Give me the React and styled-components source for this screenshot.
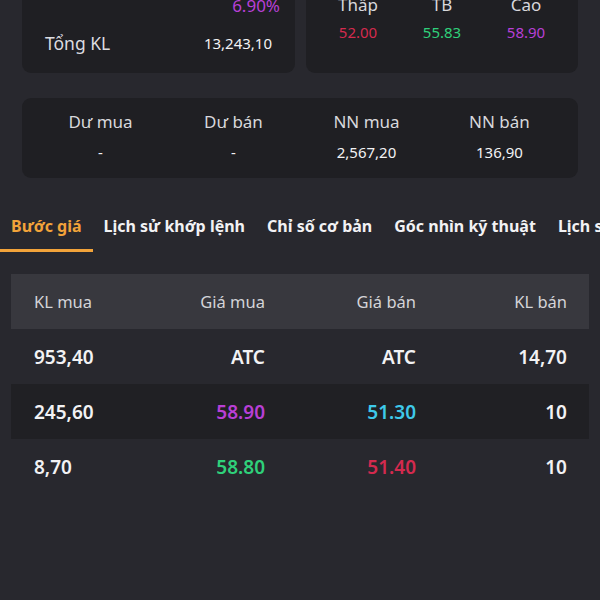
import React from 'react';
import styled, { createGlobalStyle } from 'styled-components';

const GlobalStyle = createGlobalStyle`
  html, body {
    margin: 0;
    padding: 0;
    background: #28282e;
    font-family: "Noto Sans", "Open Sans", sans-serif;
    color: #e8e8ec;
  }
  #root {
    width: 600px;
    height: 600px;
    overflow: hidden;
  }
`;

const colors = {
  red: '#d42a4e',
  green: '#2fd07a',
  purple: '#b83fd6',
  cyan: '#3ec9ea',
  white: '#f2f2f4',
};

const Page = styled.div`
  margin-top: -20px;
  display: flex;
  flex-direction: column;
`;

const Cards = styled.div`
  padding: 0 22px;
  display: flex;
  flex-direction: column;
  gap: 25px;
`;

const TopRow = styled.div`
  display: grid;
  grid-template-columns: 273px 272px;
  gap: 11px;
`;

const Card = styled.div`
  background: #1f1f23;
  border-radius: 9px;
  padding: ${(p) => p.$pad || '14px 23px 19px'};
`;

const InfoRow = styled.div`
  display: flex;
  justify-content: space-between;
  align-items: center;
  height: 22px;
  & + & {
    margin-top: 16px;
  }
`;

const InfoLabel = styled.span`
  font-size: 17.5px;
  color: #dcdce0;
`;

const InfoValue = styled.span`
  font-size: ${(p) => p.$size || '15px'};
  margin-right: ${(p) => p.$shift || '0'};
  color: ${(p) => p.$color || colors.white};
`;

const StatGrid = styled.div`
  display: grid;
  grid-template-columns: ${(p) => `repeat(${p.$cols}, 1fr)`};
  row-gap: ${(p) => p.$gap || '5px'};
  text-align: center;
  align-items: center;
`;

const StatLabel = styled.div`
  font-size: 17px;
  line-height: 22px;
  color: #d8d8dc;
`;

const StatValue = styled.div`
  font-size: 15px;
  line-height: 22px;
  color: ${(p) => p.$color || colors.white};
`;

const Tabs = styled.div`
  margin-top: 25px;
  display: flex;
  white-space: nowrap;
`;

const Tab = styled.div`
  flex: none;
  padding: 0 11px;
  height: 46px;
  display: flex;
  align-items: center;
  font-size: 16px;
  font-weight: 700;
  letter-spacing: 0;
  color: ${(p) => (p.$active ? '#f2a33a' : '#f2f2f4')};
  border-bottom: 3px solid ${(p) => (p.$active ? '#f2a33a' : 'transparent')};
  box-sizing: content-box;
`;

const Table = styled.div`
  margin: 22px 11px 0;
`;

const TRow = styled.div`
  display: grid;
  grid-template-columns: 80px 151px 151px 151px;
  align-items: center;
  padding: 0 22px 0 23px;
  height: 55px;
  background: ${(p) => (p.$head ? '#38383e' : p.$shade ? '#202024' : 'transparent')};
`;

const HeadCell = styled.div`
  font-size: 16.5px;
  color: #d4d4d8;
  text-align: ${(p) => (p.$left ? 'left' : 'right')};
`;

const Cell = styled.div`
  font-size: 19px;
  font-weight: 600;
  color: ${(p) => p.$color || colors.white};
  text-align: ${(p) => (p.$left ? 'left' : 'right')};
`;

const rows = [
  { kl: '953,40', buy: 'ATC', sell: 'ATC', klSell: '14,70' },
  { kl: '245,60', buy: '58.90', buyColor: colors.purple, sell: '51.30', sellColor: colors.cyan, klSell: '10' },
  { kl: '8,70', buy: '58.80', buyColor: colors.green, sell: '51.40', sellColor: colors.red, klSell: '10' },
];

const tabs = ['Bước giá', 'Lịch sử khớp lệnh', 'Chỉ số cơ bản', 'Góc nhìn kỹ thuật', 'Lịch sử giao dịch'];

export default function App() {
  return (
    <>
      <GlobalStyle />
      <Page>
        <Cards>
          <TopRow>
            <Card $pad="14px 23px 19px">
              <InfoRow>
                <span />
                <InfoValue $color={colors.purple} $size="17px" $shift="-8px">6.90%</InfoValue>
              </InfoRow>
              <InfoRow>
                <InfoLabel>Tổng KL</InfoLabel>
                <InfoValue>13,243,10</InfoValue>
              </InfoRow>
            </Card>
            <Card $pad="14px 10px 30px">
              <StatGrid $cols={3}>
                <StatLabel>Thấp</StatLabel>
                <StatLabel>TB</StatLabel>
                <StatLabel>Cao</StatLabel>
                <StatValue $color={colors.red}>52.00</StatValue>
                <StatValue $color={colors.green}>55.83</StatValue>
                <StatValue $color={colors.purple}>58.90</StatValue>
              </StatGrid>
            </Card>
          </TopRow>
          <Card $pad="13px 12px 15px">
            <StatGrid $cols={4} $gap="8px">
              <StatLabel>Dư mua</StatLabel>
              <StatLabel>Dư bán</StatLabel>
              <StatLabel>NN mua</StatLabel>
              <StatLabel>NN bán</StatLabel>
              <StatValue>-</StatValue>
              <StatValue>-</StatValue>
              <StatValue>2,567,20</StatValue>
              <StatValue>136,90</StatValue>
            </StatGrid>
          </Card>
        </Cards>
        <Tabs>
          {tabs.map((t, i) => (
            <Tab key={t} $active={i === 0}>{t}</Tab>
          ))}
        </Tabs>
        <Table>
          <TRow $head>
            <HeadCell $left>KL mua</HeadCell>
            <HeadCell>Giá mua</HeadCell>
            <HeadCell>Giá bán</HeadCell>
            <HeadCell>KL bán</HeadCell>
          </TRow>
          {rows.map((r, i) => (
            <TRow key={i} $shade={i === 1}>
              <Cell $left>{r.kl}</Cell>
              <Cell $color={r.buyColor}>{r.buy}</Cell>
              <Cell $color={r.sellColor}>{r.sell}</Cell>
              <Cell>{r.klSell}</Cell>
            </TRow>
          ))}
        </Table>
      </Page>
    </>
  );
}
